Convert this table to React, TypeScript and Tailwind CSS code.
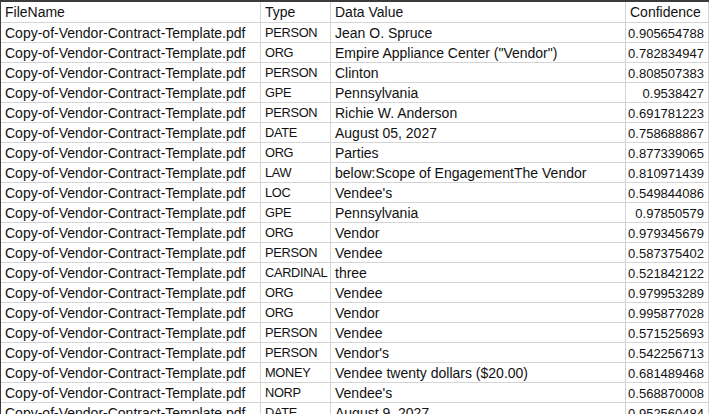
const rows: [string, string, string][] = [
  ["PERSON", "Jean O. Spruce", "0.905654788"],
  ["ORG", 'Empire Appliance Center ("Vendor")', "0.782834947"],
  ["PERSON", "Clinton", "0.808507383"],
  ["GPE", "Pennsylvania", "0.9538427"],
  ["PERSON", "Richie W. Anderson", "0.691781223"],
  ["DATE", "August 05, 2027", "0.758688867"],
  ["ORG", "Parties", "0.877339065"],
  ["LAW", "below:Scope of EngagementThe Vendor", "0.810971439"],
  ["LOC", "Vendee's", "0.549844086"],
  ["GPE", "Pennsylvania", "0.97850579"],
  ["ORG", "Vendor", "0.979345679"],
  ["PERSON", "Vendee", "0.587375402"],
  ["CARDINAL", "three", "0.521842122"],
  ["ORG", "Vendee", "0.979953289"],
  ["ORG", "Vendor", "0.995877028"],
  ["PERSON", "Vendee", "0.571525693"],
  ["PERSON", "Vendor's", "0.542256713"],
  ["MONEY", "Vendee twenty dollars ($20.00)", "0.681489468"],
  ["NORP", "Vendee's", "0.568870008"],
  ["DATE", "August 9, 2027", "0.952560484"],
]

const FILE = "Copy-of-Vendor-Contract-Template.pdf"

const cell = "flex items-center overflow-hidden whitespace-nowrap border-r border-b border-[#d4d4d4] px-[4px]"

export default function App() {
  return (
    <div className="h-[414px] w-[711px] overflow-hidden bg-white font-['Liberation_Sans',Arial,sans-serif] text-[14px] leading-none text-[#111]">
      <div className="w-[709px] border-t-2 border-l border-[#3c3c3c]">
        <div className="grid grid-cols-[260px_70px_295px_83px]">
          <div className={`${cell} h-[21px]`}>FileName</div>
          <div className={`${cell} h-[21px] px-[3px]`}>Type</div>
          <div className={`${cell} h-[21px] px-[3px]`}>Data Value</div>
          <div className={`${cell} h-[21px] px-[2px]`}>Confidence</div>
          {rows.map(([type, value, conf], i) => (
            <div key={i} className="contents">
              <div className={`${cell} h-[20px]`}>{FILE}</div>
              <div className={`${cell} h-[20px] px-[3px] pt-[2px] text-[12.8px] tracking-[-0.3px]`}>{type}</div>
              <div className={`${cell} h-[20px] px-[3px]`}>{value}</div>
              <div className={`${cell} h-[20px] justify-end px-[2px] pt-[1px] text-[13px]`}>{conf}</div>
            </div>
          ))}
        </div>
      </div>
    </div>
  )
}
